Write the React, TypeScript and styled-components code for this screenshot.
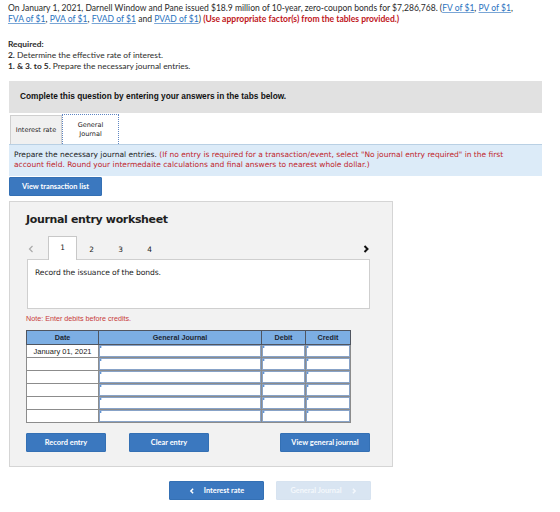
import styled, { createGlobalStyle, css } from "styled-components";

const GlobalStyle = createGlobalStyle`
  body {
    margin: 0;
    background: #fff;
    font-family: "Lato", "Liberation Sans", sans-serif;
    color: #222;
  }
`;

const Page = styled.div`
  width: 560px;
  padding: 3px 18px 0 8px;
  box-sizing: border-box;
`;

const Intro = styled.p`
  margin: 0;
  font-size: 8.55px;
  line-height: 11px;
  color: #2b2b2b;
`;

const FactorLink = styled.a`
  color: #2a73c0;
  white-space: nowrap;
  text-decoration: underline;
  text-decoration-color: #7aa6d6;
`;

const Warn = styled.b`
  color: #c0161c;
`;

const Required = styled.div`
  margin-top: 14px;
  font-size: 8.4px;
  line-height: 11px;
  color: #2b2b2b;
`;

const Banner = styled.div`
  margin-top: 9px;
  margin-left: 1px;
  height: 32px;
  background: #e1e1e1;
  display: flex;
  align-items: center;
  padding: 0 0 3px 11px;
  box-sizing: border-box;
  font-family: "Liberation Sans", Arial, sans-serif;
  font-weight: bold;
  font-size: 8.3px;
  color: #111;
`;

const TabRow = styled.div`
  display: flex;
  align-items: flex-end;
  margin: 1px 0 0 2px;
  height: 30px;
`;

const QuestionTab = styled.div<{ $active?: boolean }>`
  display: flex;
  align-items: center;
  justify-content: center;
  text-align: center;
  height: 29px;
  box-sizing: border-box;
  font-family: "DejaVu Sans", Verdana, sans-serif;
  font-size: 6.5px;
  line-height: 8.5px;
  color: #222;
  ${(p) =>
    p.$active
      ? css`
          width: 57px;
          height: 30px;
          background: #fff;
          border: 1px dotted #5f86c2;
          border-bottom: none;
        `
      : css`
          width: 52px;
          background: #f0f0f0;
          border: 1px solid #cfcfcf;
          border-bottom: none;
        `}
`;

const InfoBand = styled.div`
  margin-left: 1px;
  height: 32px;
  box-sizing: border-box;
  background: #dcebf8;
  border-top: 1px solid #b9d0e4;
  padding: 5px 24px 0 5px;
  font-family: "DejaVu Sans", Verdana, sans-serif;
  font-size: 7.5px;
  line-height: 9.5px;
  color: #1b1b1b;
`;

const Red = styled.span`
  color: #c0262c;
`;

const Button = styled.button<{ $w: number; $muted?: boolean }>`
  width: ${(p) => p.$w}px;
  height: 19px;
  border: 1px solid ${(p) => (p.$muted ? "#d7e3f0" : "#3470b4")};
  border-radius: 1px;
  background: ${(p) => (p.$muted ? "#d9e5f2" : "#3b78bf")};
  color: ${(p) => (p.$muted ? "#f4f8fc" : "#fff")};
  font-family: "Lato", "Liberation Sans", sans-serif;
  font-weight: bold;
  font-size: 7.4px;
  padding: 0;
  display: flex;
  align-items: center;
  justify-content: center;
  gap: 9px;
  cursor: pointer;
`;

const TransactionRow = styled.div`
  margin: 1px 0 0 1px;
`;

const Worksheet = styled.section`
  margin: 5px 0 0 1px;
  width: 384px;
  height: 266px;
  box-sizing: border-box;
  background: #f2f2f2;
  border: 1px solid #d5d5d5;
  padding: 11px 22px 0 16px;
`;

const SheetTitle = styled.h2`
  margin: 0;
  font-family: "DejaVu Sans", Verdana, sans-serif;
  font-size: 11px;
  letter-spacing: -0.35px;
  font-weight: bold;
  color: #1f1f1f;
  line-height: 14px;
`;

const EntryTabs = styled.div`
  display: flex;
  align-items: flex-end;
  height: 24px;
  margin-top: 8px;
  position: relative;
  z-index: 1;
`;

const Arrow = styled.span<{ $dark?: boolean }>`
  width: 21px;
  height: 20px;
  display: flex;
  align-items: center;
  justify-content: ${(p) => (p.$dark ? "flex-end" : "flex-start")};
  padding-left: ${(p) => (p.$dark ? "0" : "1px")};
  margin-left: ${(p) => (p.$dark ? "auto" : "0")};
  color: ${(p) => (p.$dark ? "#111" : "#aaa")};
`;

const EntryTab = styled.span<{ $active?: boolean }>`
  width: 29px;
  height: ${(p) => (p.$active ? "24px" : "20px")};
  margin-bottom: ${(p) => (p.$active ? "-1px" : "0")};
  box-sizing: border-box;
  display: flex;
  align-items: ${(p) => (p.$active ? "flex-start" : "center")};
  padding-top: ${(p) => (p.$active ? "6px" : "0")};
  justify-content: center;
  font-family: "DejaVu Sans", Verdana, sans-serif;
  font-size: 7.4px;
  color: #222;
  background: ${(p) => (p.$active ? "#fff" : "transparent")};
  border: ${(p) => (p.$active ? "1px solid #c8c8c8" : "none")};
  border-bottom: none;
`;

const Prompt = styled.div`
  margin-left: 1px;
  height: 50px;
  box-sizing: border-box;
  background: #fff;
  border: 1px solid #cfcfcf;
  padding: 8px 7px;
  font-family: "DejaVu Sans", Verdana, sans-serif;
  font-size: 7.6px;
  letter-spacing: -0.1px;
  color: #1c1c1c;
`;

const Note = styled.div`
  margin-top: 5px;
  font-family: "Liberation Sans", Arial, sans-serif;
  font-size: 7.2px;
  color: #c83a3a;
`;

const Grid = styled.table`
  margin-top: 7px;
  border-collapse: collapse;
  table-layout: fixed;
  width: 320px;
  font-family: "Liberation Sans", Arial, sans-serif;
  font-size: 7.5px;
`;

const Head = styled.th<{ $w: number }>`
  width: ${(p) => p.$w}px;
  height: 13px;
  padding: 0;
  background: #7caee3;
  border: 1px solid #4f5560;
  color: #1d2733;
  font-weight: bold;
  font-size: 7.2px;
`;

const DateCell = styled.td`
  height: 12px;
  padding: 0;
  border: 1px solid #8c8c8c;
  background: #fff;
  text-align: center;
  color: #222;
`;

const FieldCell = styled.td`
  height: 12px;
  padding: 0;
  border: 1px solid #8c8c8c;
  background: #fff;
`;

const Field = styled.div`
  position: relative;
  height: 12px;
  box-sizing: border-box;
  border: 1.5px solid #88a3c8;
  background: #fff;
`;

const Marker = styled.i`
  position: absolute;
  left: 0;
  top: 0;
  width: 0;
  height: 0;
  border-top: 1.5px solid transparent;
  border-bottom: 1.5px solid transparent;
  border-left: 2.5px solid #2b6fc4;
`;

const ActionRow = styled.div`
  display: flex;
  gap: 23px;
  margin-top: 10px;
`;

const NavRow = styled.div`
  display: flex;
  gap: 12px;
  margin: 14px 0 0 161px;
`;

const rows = ["January 01, 2021", "", "", "", "", ""];

const Chevron = ({ dir, size = 7, weight = 2 }: { dir: "left" | "right"; size?: number; weight?: number }) => (
  <svg width={size} height={size} viewBox="0 0 8 8">
    <path
      d={dir === "left" ? "M5.5 1 L2.5 4 L5.5 7" : "M2.5 1 L5.5 4 L2.5 7"}
      fill="none"
      stroke="currentColor"
      strokeWidth={weight}
    />
  </svg>
);

export default function App() {
  return (
    <Page>
      <GlobalStyle />
      <Intro>
        On January 1, 2021, Darnell Window and Pane issued $18.9 million of 10-year, zero-coupon bonds for
        $7,286,768. (<FactorLink>FV of $1</FactorLink>, <FactorLink>PV of $1</FactorLink>,{" "}
        <FactorLink>FVA of $1</FactorLink>, <FactorLink>PVA of $1</FactorLink>,{" "}
        <FactorLink>FVAD of $1</FactorLink> and <FactorLink>PVAD of $1</FactorLink>){" "}
        <Warn>(Use appropriate factor(s) from the tables provided.)</Warn>
      </Intro>
      <Required>
        <b>Required:</b>
        <br />
        <b>2.</b> Determine the effective rate of interest.
        <br />
        <b>1. &amp; 3. to 5.</b> Prepare the necessary journal entries.
      </Required>

      <Banner>Complete this question by entering your answers in the tabs below.</Banner>

      <TabRow>
        <QuestionTab>Interest rate</QuestionTab>
        <QuestionTab $active>
          General
          <br />
          Journal
        </QuestionTab>
      </TabRow>
      <InfoBand>
        Prepare the necessary journal entries.{" "}
        <Red>
          (If no entry is required for a transaction/event, select "No journal entry required" in the first
          account field. Round your intermedaite calculations and final answers to nearest whole dollar.)
        </Red>
      </InfoBand>

      <TransactionRow>
        <Button $w={93}>View transaction list</Button>
      </TransactionRow>

      <Worksheet>
        <SheetTitle>Journal entry worksheet</SheetTitle>
        <EntryTabs>
          <Arrow>
            <Chevron dir="left" size={8} weight={1.2} />
          </Arrow>
          <EntryTab $active>1</EntryTab>
          <EntryTab>2</EntryTab>
          <EntryTab>3</EntryTab>
          <EntryTab>4</EntryTab>
          <Arrow $dark>
            <Chevron dir="right" size={8} weight={2} />
          </Arrow>
        </EntryTabs>
        <Prompt>Record the issuance of the bonds.</Prompt>
        <Note>Note: Enter debits before credits.</Note>

        <Grid>
          <thead>
            <tr>
              <Head $w={71}>Date</Head>
              <Head $w={162}>General Journal</Head>
              <Head $w={43}>Debit</Head>
              <Head $w={44}>Credit</Head>
            </tr>
          </thead>
          <tbody>
            {rows.map((d, i) => (
              <tr key={i}>
                <DateCell>{d}</DateCell>
                {[0, 1, 2].map((c) => (
                  <FieldCell key={c}>
                    <Field>
                      <Marker />
                    </Field>
                  </FieldCell>
                ))}
              </tr>
            ))}
          </tbody>
        </Grid>

        <ActionRow>
          <Button $w={80}>Record entry</Button>
          <Button $w={80}>Clear entry</Button>
          <Button $w={90} style={{ marginLeft: "auto" }}>
            View general journal
          </Button>
        </ActionRow>
      </Worksheet>

      <NavRow>
        <Button $w={95}>
          <Chevron dir="left" size={6} weight={2} />
          Interest rate
        </Button>
        <Button $w={95} $muted>
          General Journal
          <Chevron dir="right" size={6} weight={2} />
        </Button>
      </NavRow>
    </Page>
  );
}
